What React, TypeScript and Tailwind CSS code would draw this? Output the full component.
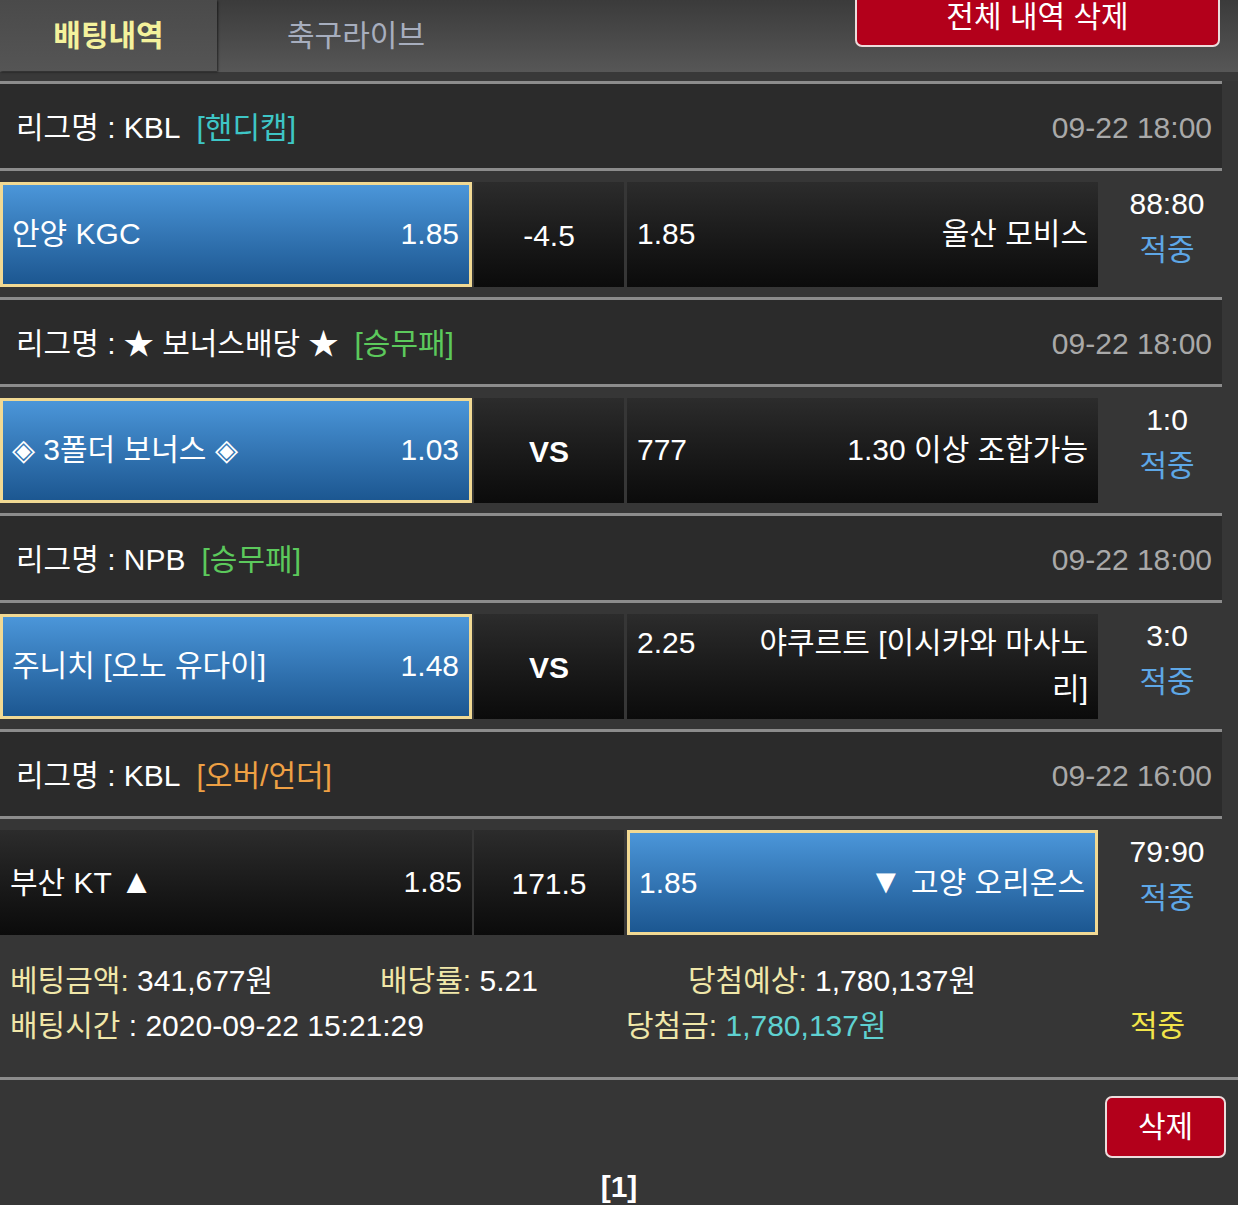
import React from 'react'

type Side = {
  name: React.ReactNode
  odds: string
  picked?: boolean
}

interface Bet {
  league: string
  tag: string
  tagColor: string
  time: string
  home: Side
  mid: string
  midBold?: boolean
  away: Side
  score: string
}

const bets: Bet[] = [
  {
    league: 'KBL',
    tag: '[핸디캡]',
    tagColor: 'text-[#3ec6c6]',
    time: '09-22 18:00',
    home: { name: '안양 KGC', odds: '1.85', picked: true },
    mid: '-4.5',
    away: { name: '울산 모비스', odds: '1.85' },
    score: '88:80',
  },
  {
    league: '★ 보너스배당 ★',
    tag: '[승무패]',
    tagColor: 'text-[#5cc95c]',
    time: '09-22 18:00',
    home: { name: '◈ 3폴더 보너스 ◈', odds: '1.03', picked: true },
    mid: 'VS',
    midBold: true,
    away: { name: '1.30 이상 조합가능', odds: '777' },
    score: '1:0',
  },
  {
    league: 'NPB',
    tag: '[승무패]',
    tagColor: 'text-[#5cc95c]',
    time: '09-22 18:00',
    home: { name: '주니치 [오노 유다이]', odds: '1.48', picked: true },
    mid: 'VS',
    midBold: true,
    away: {
      name: (
        <>
          야쿠르트 [이시카와 마사노
          <br />
          리]
        </>
      ),
      odds: '2.25',
    },
    score: '3:0',
  },
  {
    league: 'KBL',
    tag: '[오버/언더]',
    tagColor: 'text-[#eea044]',
    time: '09-22 16:00',
    home: { name: <>부산 KT <span className="text-[34px]">▲</span></>, odds: '1.85' },
    mid: '171.5',
    away: { name: <><span className="text-[34px]">▼</span> 고양 오리온스</>, odds: '1.85', picked: true },
    score: '79:90',
  },
]

const cellBase = 'h-[105px] flex items-center text-white'
const picked =
  'border-[3px] border-[#f1d993] bg-gradient-to-b from-[#4b96d9] to-[#1c5791]'
const plain = 'bg-gradient-to-b from-[#2c2c2c] to-[#0b0b0b]'

const HomeCell = ({ side }: { side: Side }) => (
  <div
    className={`${cellBase} w-[472px] justify-between ${
      side.picked ? `${picked} pl-[9px] pr-[10px]` : `${plain} pl-[10px] pr-[10px]`
    }`}
  >
    <span>{side.name}</span>
    <span>{side.odds}</span>
  </div>
)

const AwayCell = ({ side }: { side: Side }) => (
  <div
    className={`${cellBase} w-[471px] ${
      side.picked ? `${picked} pl-[9px] pr-[10px]` : `${plain} pl-[10px] pr-[10px]`
    }`}
  >
    <div className="flex w-full items-baseline justify-between">
      <span>{side.odds}</span>
      <span className="text-right">{side.name}</span>
    </div>
  </div>
)

const App = () => {
  return (
    <div
      className="min-h-screen overflow-hidden bg-[#363636] text-[30px] leading-[46px] text-white"
      style={{ fontFamily: '"Liberation Sans", "Noto Sans CJK KR", sans-serif' }}
    >
      {/* tabs */}
      <div className="flex h-[72px] bg-gradient-to-b from-[#3b3b3b] to-[#575757]">
        <div className="flex h-[71px] w-[217px] items-center justify-center bg-gradient-to-b from-[#4a4a4a] to-[#555555] text-[30px] font-bold text-[#f4f29c] shadow-[1px_1px_2px_rgba(0,0,0,0.6)]">
          배팅내역
        </div>
        <div className="flex h-[71px] w-[278px] items-center justify-center text-[30px] text-[#a7aebe]">
          축구라이브
        </div>
        <button className="mr-[18px] ml-auto -mt-[14px] flex h-[61px] w-[365px] items-center justify-center rounded-[7px] border-2 border-[#ecdcdc] bg-[#b3001b] text-[30px] text-white">
          전체 내역 삭제
        </button>
      </div>
      <div className="h-[9px] bg-[#393939]" />

      <div className="w-[1222px]">
        {bets.map((b, i) => (
          <div key={i}>
            <div className="h-[3px] bg-[#8c8c8c]" />
            <div className="flex h-[84px] items-center justify-between bg-[#2b2b2b] pt-[4px] pr-[10px] pl-[16px]">
              <div>
                리그명 : {b.league}
                <span className={`ml-[16px] ${b.tagColor}`}>{b.tag}</span>
              </div>
              <div className="text-[#a9a9a9]">{b.time}</div>
            </div>
            <div className="h-[3px] bg-[#8c8c8c]" />
            <div className="flex h-[126px] items-center bg-[#363636]">
              <HomeCell side={b.home} />
              <div
                className={`${cellBase} ${plain} ml-[2px] w-[150px] justify-center pt-[4px] ${
                  b.midBold ? 'font-bold' : ''
                }`}
              >
                {b.mid}
              </div>
              <div className="ml-[3px]">
                <AwayCell side={b.away} />
              </div>
              <div className="flex w-[124px] flex-col items-center pb-[14px] pl-[14px]">
                <span>{b.score}</span>
                <span className="text-[#5ea7e6]">적중</span>
              </div>
            </div>
          </div>
        ))}
      </div>

      {/* summary */}
      <div className="h-[132px] pt-[13px] pl-[10px] leading-[45px]">
        <div className="flex">
          <span className="w-[370px]">
            <span className="text-[#f0e7a9]">베팅금액:</span> 341,677원
          </span>
          <span className="w-[308px]">
            <span className="text-[#f0e7a9]">배당률:</span> 5.21
          </span>
          <span>
            <span className="text-[#f0e7a9]">당첨예상:</span> 1,780,137원
          </span>
        </div>
        <div className="flex">
          <span className="w-[616px]">
            <span className="text-[#f0e7a9]">배팅시간</span> : 2020-09-22 15:21:29
          </span>
          <span className="w-[504px]">
            <span className="text-[#f0e7a9]">당첨금:</span>{' '}
            <span className="text-[#5fd1d1]">1,780,137원</span>
          </span>
          <span className="text-[#f2e54a]">적중</span>
        </div>
      </div>
      <div className="h-[3px] bg-[#8c8c8c]" />

      <div className="flex justify-end pt-[16px] pr-[12px]">
        <button className="flex h-[62px] w-[121px] items-center justify-center rounded-[7px] border-2 border-[#ecdcdc] bg-[#b3001b] text-[30px] text-white">
          삭제
        </button>
      </div>
      <div className="pt-[6px] text-center font-bold">[1]</div>
    </div>
  )
}

export default App
